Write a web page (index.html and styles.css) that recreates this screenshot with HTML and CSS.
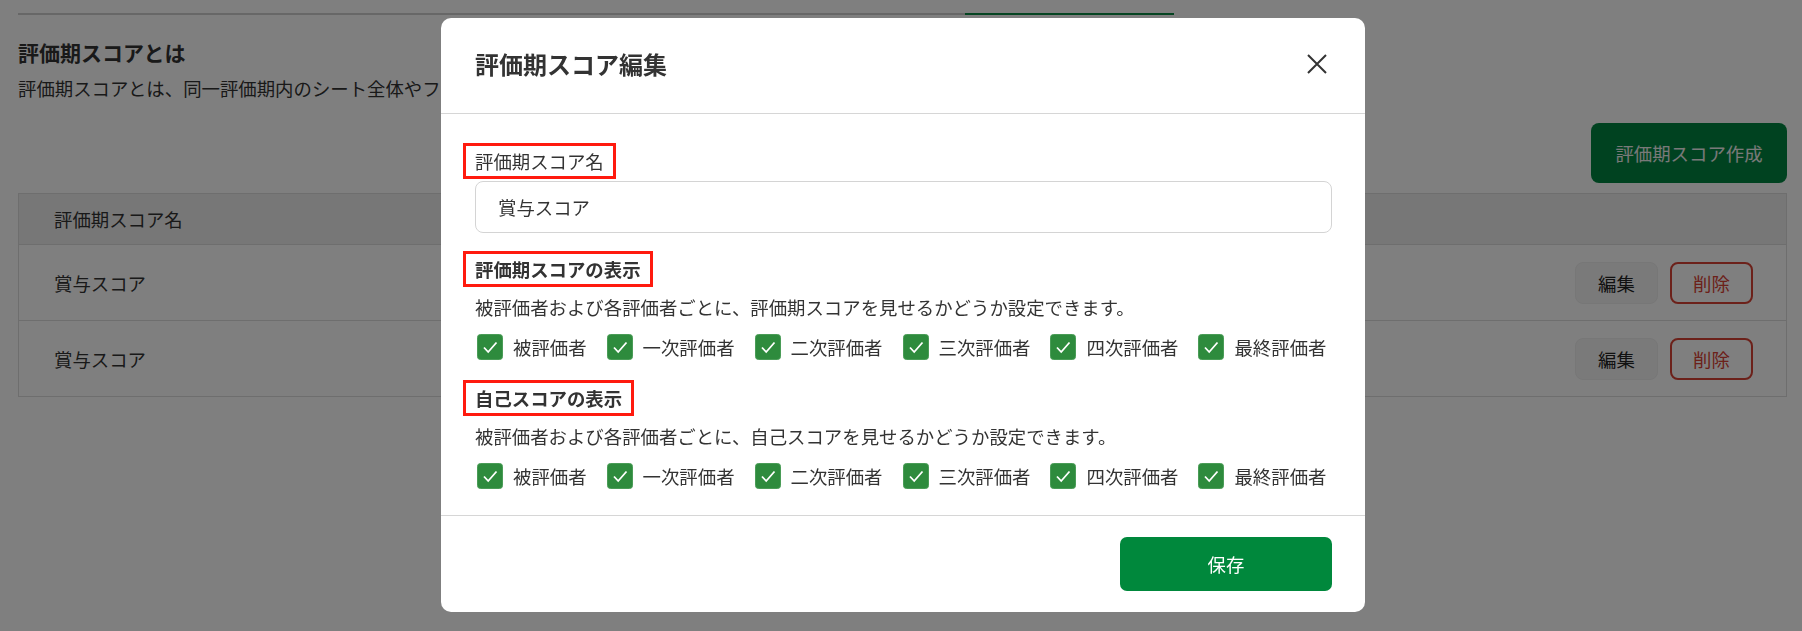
FILE: index.html
```html
<!DOCTYPE html>
<html lang="ja">
<head>
<meta charset="UTF-8">
<title>評価期スコア編集</title>
<link rel="stylesheet" href="styles.css">
</head>
<body>
<div class="page">
  <div class="tabs">
    <span class="tabs_line"></span>
    <span class="tabs_active"></span>
  </div>
  <h2 class="intro_title">評価期スコアとは</h2>
  <p class="intro_text">評価期スコアとは、同一評価期内のシート全体やフェーズごとのスコアを集計したものです。</p>
  <div class="toolbar">
    <button class="btn_create">評価期スコア作成</button>
  </div>
  <table class="score_table">
    <thead>
      <tr><th>評価期スコア名</th><th></th></tr>
    </thead>
    <tbody>
      <tr>
        <td>賞与スコア</td>
        <td class="actions"><button class="btn_edit">編集</button><button class="btn_delete">削除</button></td>
      </tr>
      <tr>
        <td>賞与スコア</td>
        <td class="actions"><button class="btn_edit">編集</button><button class="btn_delete">削除</button></td>
      </tr>
    </tbody>
  </table>
</div>

<div class="overlay">
  <div class="modal">
    <div class="modal_head">
      <h3>評価期スコア編集</h3>
      <button class="modal_close">
        <svg width="20" height="20" viewBox="0 0 20 20"><path d="M1 1L19 19M19 1L1 19" stroke="#333" stroke-width="2" fill="none"/></svg>
      </button>
    </div>
    <div class="modal_body">
      <label class="field_label"><span class="mark">評価期スコア名</span></label>
      <input class="field_input" type="text" value="賞与スコア">

      <div class="section_title"><span class="mark bold">評価期スコアの表示</span></div>
      <p class="section_desc">被評価者および各評価者ごとに、評価期スコアを見せるかどうか設定できます。</p>
      <div class="check_row">
        <span class="check"><svg class="box" viewBox="0 0 26 26"><rect x="0.5" y="0.5" width="25" height="25" rx="3" fill="#2e8b3d" stroke="#4a9c57"/><path d="M7 13.5L11.2 18L19.5 8.5" stroke="#fff" stroke-width="1.8" fill="none"/></svg>被評価者</span>
        <span class="check"><svg class="box" viewBox="0 0 26 26"><rect x="0.5" y="0.5" width="25" height="25" rx="3" fill="#2e8b3d" stroke="#4a9c57"/><path d="M7 13.5L11.2 18L19.5 8.5" stroke="#fff" stroke-width="1.8" fill="none"/></svg>一次評価者</span>
        <span class="check"><svg class="box" viewBox="0 0 26 26"><rect x="0.5" y="0.5" width="25" height="25" rx="3" fill="#2e8b3d" stroke="#4a9c57"/><path d="M7 13.5L11.2 18L19.5 8.5" stroke="#fff" stroke-width="1.8" fill="none"/></svg>二次評価者</span>
        <span class="check"><svg class="box" viewBox="0 0 26 26"><rect x="0.5" y="0.5" width="25" height="25" rx="3" fill="#2e8b3d" stroke="#4a9c57"/><path d="M7 13.5L11.2 18L19.5 8.5" stroke="#fff" stroke-width="1.8" fill="none"/></svg>三次評価者</span>
        <span class="check"><svg class="box" viewBox="0 0 26 26"><rect x="0.5" y="0.5" width="25" height="25" rx="3" fill="#2e8b3d" stroke="#4a9c57"/><path d="M7 13.5L11.2 18L19.5 8.5" stroke="#fff" stroke-width="1.8" fill="none"/></svg>四次評価者</span>
        <span class="check"><svg class="box" viewBox="0 0 26 26"><rect x="0.5" y="0.5" width="25" height="25" rx="3" fill="#2e8b3d" stroke="#4a9c57"/><path d="M7 13.5L11.2 18L19.5 8.5" stroke="#fff" stroke-width="1.8" fill="none"/></svg>最終評価者</span>
      </div>

      <div class="section_title second"><span class="mark bold">自己スコアの表示</span></div>
      <p class="section_desc">被評価者および各評価者ごとに、自己スコアを見せるかどうか設定できます。</p>
      <div class="check_row">
        <span class="check"><svg class="box" viewBox="0 0 26 26"><rect x="0.5" y="0.5" width="25" height="25" rx="3" fill="#2e8b3d" stroke="#4a9c57"/><path d="M7 13.5L11.2 18L19.5 8.5" stroke="#fff" stroke-width="1.8" fill="none"/></svg>被評価者</span>
        <span class="check"><svg class="box" viewBox="0 0 26 26"><rect x="0.5" y="0.5" width="25" height="25" rx="3" fill="#2e8b3d" stroke="#4a9c57"/><path d="M7 13.5L11.2 18L19.5 8.5" stroke="#fff" stroke-width="1.8" fill="none"/></svg>一次評価者</span>
        <span class="check"><svg class="box" viewBox="0 0 26 26"><rect x="0.5" y="0.5" width="25" height="25" rx="3" fill="#2e8b3d" stroke="#4a9c57"/><path d="M7 13.5L11.2 18L19.5 8.5" stroke="#fff" stroke-width="1.8" fill="none"/></svg>二次評価者</span>
        <span class="check"><svg class="box" viewBox="0 0 26 26"><rect x="0.5" y="0.5" width="25" height="25" rx="3" fill="#2e8b3d" stroke="#4a9c57"/><path d="M7 13.5L11.2 18L19.5 8.5" stroke="#fff" stroke-width="1.8" fill="none"/></svg>三次評価者</span>
        <span class="check"><svg class="box" viewBox="0 0 26 26"><rect x="0.5" y="0.5" width="25" height="25" rx="3" fill="#2e8b3d" stroke="#4a9c57"/><path d="M7 13.5L11.2 18L19.5 8.5" stroke="#fff" stroke-width="1.8" fill="none"/></svg>四次評価者</span>
        <span class="check"><svg class="box" viewBox="0 0 26 26"><rect x="0.5" y="0.5" width="25" height="25" rx="3" fill="#2e8b3d" stroke="#4a9c57"/><path d="M7 13.5L11.2 18L19.5 8.5" stroke="#fff" stroke-width="1.8" fill="none"/></svg>最終評価者</span>
      </div>
    </div>
    <div class="modal_foot">
      <button class="btn_save">保存</button>
    </div>
  </div>
</div>
</body>
</html>
```

FILE: styles.css
```css
* {
  margin: 0;
  padding: 0;
  box-sizing: border-box;
}
html, body {
  width: 1802px;
  height: 631px;
  overflow: hidden;
}
body {
  font-family: "Noto Sans CJK JP", "Noto Sans", sans-serif;
  color: #333;
  background: #fff;
}
button {
  font-family: inherit;
  cursor: pointer;
}

/* 背景ページ */
.page {
  width: 1769px;
  margin-left: 18px;
  padding-top: 13px;
}
.tabs {
  display: flex;
  height: 2px;
}
.tabs_line {
  width: 947px;
  background: #cfcfcf;
}
.tabs_active {
  width: 209px;
  background: #0b8a45;
}
.intro_title {
  margin-top: 22px;
  font-size: 21px;
  line-height: 30px;
  font-weight: 700;
}
.intro_text {
  margin-top: 7px;
  font-size: 18.4px;
  line-height: 28px;
}
.toolbar {
  display: flex;
  justify-content: flex-end;
  margin-top: 21px;
}
.btn_create {
  width: 196px;
  height: 60px;
  border: none;
  border-radius: 8px;
  background: #008541;
  color: #f2f2f2;
  font-size: 18.4px;
}
.score_table {
  width: 100%;
  margin-top: 10px;
  border-collapse: collapse;
  border: 1px solid #dcdcdc;
  font-size: 18.4px;
}
.score_table th {
  height: 51px;
  padding-left: 35px;
  background: #eee;
  text-align: left;
  font-weight: 400;
}
.score_table td {
  height: 76px;
  padding-left: 35px;
  border-top: 1px solid #dcdcdc;
  background: #fff;
}
.score_table td.actions {
  padding-right: 33px;
  text-align: right;
  font-size: 0;
}
.btn_edit,
.btn_delete {
  width: 83px;
  height: 42px;
  border-radius: 8px;
  font-size: 18.4px;
}
.btn_edit {
  background: #f5f5f5;
  border: 1px solid #eee;
  color: #222;
}
.btn_delete {
  margin-left: 12px;
  background: #fff;
  border: 2px solid #d84234;
  color: #d84234;
}

/* モーダル */
.overlay {
  position: fixed;
  inset: 0;
  background: rgba(0, 0, 0, 0.5);
  display: flex;
  justify-content: center;
  align-items: flex-start;
  padding: 18px 0 0 4px;
}
.modal {
  width: 924px;
  background: #fff;
  border-radius: 10px;
  overflow: hidden;
}
.modal_head {
  height: 96px;
  display: flex;
  align-items: center;
  justify-content: space-between;
  padding: 0 38px 3px 34px;
  border-bottom: 1px solid #d6d6d6;
}
.modal_head h3 {
  font-size: 24px;
  font-weight: 700;
  line-height: 32px;
}
.modal_close {
  width: 20px;
  height: 20px;
  border: none;
  background: none;
  display: flex;
}
.modal_body {
  padding: 29px 33px 26px 34px;
  font-size: 18.4px;
}
.mark {
  display: inline-block;
  margin-left: -12px;
  padding: 3px 9px 3px 9px;
  border: 3px solid #ff1a0e;
  line-height: 24px;
}
.mark.bold {
  font-weight: 700;
}
.field_label {
  display: block;
}
.field_input {
  display: block;
  width: 100%;
  height: 52px;
  margin-top: 2px;
  padding: 0 22px;
  border: 1.5px solid #d4d4d4;
  border-radius: 8px;
  font-family: inherit;
  font-size: 18.4px;
  color: #333;
}
.section_title {
  margin-top: 18px;
}
.section_title.second {
  margin-top: 20px;
}
.section_desc {
  margin-top: 8px;
  line-height: 24px;
}
.check_row {
  display: flex;
  gap: 20px;
  margin-top: 15px;
  padding-left: 2px;
  white-space: nowrap;
}
.check {
  display: flex;
  flex: none;
  align-items: center;
  gap: 10px;
  height: 26px;
  line-height: 26px;
}
.check .box {
  width: 26px;
  height: 26px;
  flex: none;
}
.modal_foot {
  display: flex;
  justify-content: flex-end;
  padding: 21px 33px 21px 0;
  border-top: 1px solid #d6d6d6;
}
.btn_save {
  width: 212px;
  height: 54px;
  border: none;
  border-radius: 7px;
  background: #00883c;
  color: #fff;
  font-size: 18.4px;
}
```
